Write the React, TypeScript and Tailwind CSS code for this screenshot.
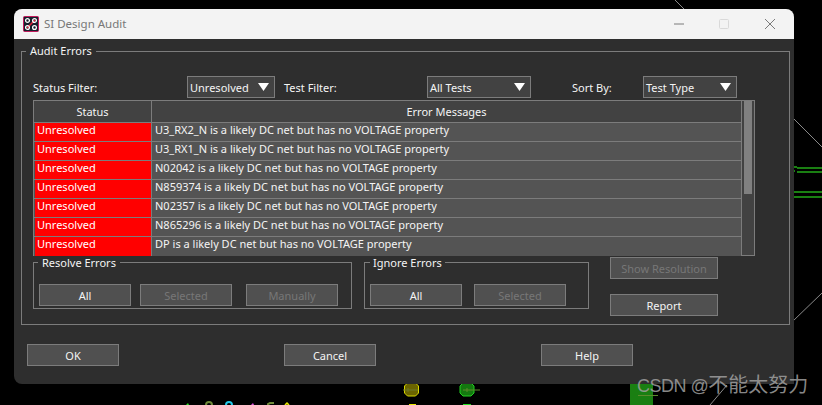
import React from "react";

const rows = [
  "U3_RX2_N is a likely DC net but has no VOLTAGE property",
  "U3_RX1_N is a likely DC net but has no VOLTAGE property",
  "N02042 is a likely DC net but has no VOLTAGE property",
  "N859374 is a likely DC net but has no VOLTAGE property",
  "N02357 is a likely DC net but has no VOLTAGE property",
  "N865296 is a likely DC net but has no VOLTAGE property",
  "DP is a likely DC net but has no VOLTAGE property",
];

function Btn({ label, disabled, className = "" }: { label: string; disabled?: boolean; className?: string }) {
  return (
    <button
      className={`box-border flex h-[22px] w-[92px] items-center justify-center border border-[#7c7c7c] bg-[#505050] text-[11px] leading-none ${
        disabled ? "text-[#777777]" : "text-[#f4f4f4]"
      } ${className}`}
    >
      {label}
    </button>
  );
}

function Select({ value, className }: { value: string; className: string }) {
  return (
    <div className={`box-border flex h-[22px] items-center justify-between border border-[#7c7c7c] bg-[#424242] pl-[2px] pr-[5px] text-[11px] text-[#f4f4f4] ${className}`}>
      <span className="pt-[2px]">{value}</span>
      <svg width="11" height="8" viewBox="0 0 11 8" className="mb-[1px]">
        <path d="M0 0h11L5.5 8z" fill="#ffffff" />
      </svg>
    </div>
  );
}

function Backdrop() {
  return (
    <svg className="absolute left-0 top-0" width="822" height="405" viewBox="0 0 822 405" shapeRendering="crispEdges">
      <path d="M675 0L684 9M793 118L822 147M793 321L822 293M710 405L727 385" stroke="#8a8a8a" strokeWidth="1" fill="none" shapeRendering="auto" />
      <g fill="#1a7f12">
        <rect x="797" y="167" width="25" height="2" />
        <rect x="793" y="166" width="4" height="2" />
        <rect x="797" y="171" width="25" height="2" />
        <rect x="793" y="170" width="2" height="2" />
        <rect x="793" y="191" width="29" height="2" />
        <rect x="793" y="196" width="29" height="2" />
        <rect x="630" y="384" width="23" height="21" />
      </g>
      <rect x="638" y="395" width="20" height="1" fill="#5c8a2c" />
      <g shapeRendering="auto">
        <path d="M407 384h8l3 3v7l-3 3h-8l-3-3v-7z" transform="translate(.5 -1)" fill="#6b6400" stroke="#d8d800" />
        <path d="M403 390h15M408 388v4" stroke="#6f7a2a" fill="none" />
        <path d="M463 384h8l3 3v7l-3 3h-8l-3-3v-7z" transform="translate(0 -1)" fill="#14780f" stroke="#22d022" />
        <path d="M463 390h17M467 388v4" stroke="#5c8a2c" fill="none" />
        <path d="M186 405l2-2 1 2" fill="#22e022" />
        <path d="M206 405a3 3 0 0 1 6 0" stroke="#6f8a3a" strokeWidth="2" fill="none" />
        <path d="M226 405a3 3 0 0 1 6 0" stroke="#22c8e8" strokeWidth="2" fill="none" />
        <path d="M251 405l2-2 1 2" fill="#e050e0" />
        <path d="M268 405v-1l2-1h4" stroke="#6f8a3a" strokeWidth="2" fill="none" />
        <path d="M285 405l2-2 2 2" stroke="#e8e800" strokeWidth="1.5" fill="none" />
      </g>
      <rect x="409" y="404" width="7" height="1" fill="#e8e800" />
      <rect x="463" y="404" width="8" height="1" fill="#22e022" />
    </svg>
  );
}

function AppIcon() {
  return (
    <svg width="16" height="16" viewBox="0 0 16 16">
      <rect x="0.5" y="0.5" width="15" height="15" rx="1" fill="#16202c" stroke="#c2185b" />
      <path d="M4 12L12 4" stroke="#e0203a" strokeWidth="1.6" />
      <circle cx="4.5" cy="4.5" r="1.9" fill="none" stroke="#ffffff" strokeWidth="1.3" />
      <circle cx="11.5" cy="4.5" r="1.9" fill="none" stroke="#ffffff" strokeWidth="1.3" />
      <circle cx="4.5" cy="11.5" r="1.9" fill="none" stroke="#ffffff" strokeWidth="1.3" />
      <circle cx="11.5" cy="11.5" r="1.9" fill="none" stroke="#ffffff" strokeWidth="1.3" />
    </svg>
  );
}

export default function App() {
  return (
    <div
      className="relative h-[405px] w-[822px] overflow-hidden bg-black pl-[14px] pt-[9px]"
      style={{ fontFamily: '"Noto Sans", "Open Sans", sans-serif' }}
    >
      <Backdrop />
      <div className="relative flex h-[375px] w-[780px] flex-col overflow-hidden rounded-t-lg rounded-bl-lg bg-[#2e2e2e]">
        {/* title bar */}
        <div className="flex h-[30px] shrink-0 items-center bg-[#f3f3f3] pl-[9px] pr-[19px]">
          <AppIcon />
          <span className="ml-[5px] text-[11.5px] text-[#777777]">SI Design Audit</span>
          <svg className="ml-auto" width="101" height="10" viewBox="0 0 101 10" fill="none">
            <path d="M0 5h10" stroke="#7a7a7a" />
            <rect x="45.5" y="0.5" width="9" height="9" rx="1" stroke="#d9d9d9" />
            <path d="M91 0l10 10M101 0L91 10" stroke="#7a7a7a" />
          </svg>
        </div>

        {/* body */}
        <div className="flex flex-col px-[7px] pt-[4px]">
          <fieldset className="box-border h-[282px] w-[769px] border border-[#7c7c7c] pl-[11px]">
            <legend className="ml-[-7px] px-[4px] text-[11px] leading-[16px] text-[#f4f4f4]">Audit Errors</legend>

            <div className="mt-[17px] flex items-center text-[11px] text-[#f4f4f4]">
              <span className="w-[154px] pt-[2px]">Status Filter:</span>
              <Select value="Unresolved" className="w-[88px]" />
              <span className="ml-[9px] w-[143px] pt-[2px]">Test Filter:</span>
              <Select value="All Tests" className="w-[104px]" />
              <span className="ml-[41px] w-[71px] pt-[2px]">Sort By:</span>
              <Select value="Test Type" className="w-[94px]" />
            </div>

            {/* table */}
            <div className="mt-[2px] box-border flex h-[156px] w-[722px] border border-[#7c7c7c] bg-[#424242] text-[11px] text-[#f4f4f4]">
              <div className="flex w-[707px] flex-col">
                <div className="box-border flex h-[22px] shrink-0 border-b border-[#7c7c7c]">
                  <div className="box-border flex w-[118px] items-center justify-center border-r border-[#7c7c7c] pt-[1px]">Status</div>
                  <div className="flex flex-1 items-center justify-center pt-[1px]">Error Messages</div>
                </div>
                {rows.map((r) => (
                  <div key={r} className="box-border flex h-[19px] shrink-0 border-b border-[#7c7c7c] bg-[#545454] last:border-b-0">
                    <div className="box-border w-[118px] border-r border-[#7c7c7c] pl-[1px]">
                      <div className="flex h-full items-center bg-[#ff0000] pb-[4px] pl-[2px] text-white">Unresolved</div>
                    </div>
                    <div className="flex flex-1 items-center pb-[4px] pl-[3px]">{r}</div>
                  </div>
                ))}
              </div>
              <div className="box-border flex-1 border-l border-[#7c7c7c] pl-[2px]">
                <div className="h-[93px] w-[8px] bg-[#808080]" />
              </div>
            </div>

            {/* action groups */}
            <div className="mt-[-1px] flex items-start">
              <fieldset className="box-border h-[54px] w-[319px] border border-[#7c7c7c] pl-[5px]">
                <legend className="ml-[-1px] px-[4px] text-[11px] leading-[14px] text-[#f4f4f4]">
                  <span className="relative top-[1px]">Resolve Errors</span>
                </legend>
                <div className="mt-[15px] flex">
                  <Btn label="All" />
                  <Btn label="Selected" disabled className="ml-[9px]" />
                  <Btn label="Manually" disabled className="ml-[14px]" />
                </div>
              </fieldset>
              <fieldset className="ml-[12px] box-border h-[54px] w-[225px] border border-[#7c7c7c] pl-[5px]">
                <legend className="px-[3px] text-[11px] leading-[14px] text-[#f4f4f4]">
                  <span className="relative top-[1px]">Ignore Errors</span>
                </legend>
                <div className="mt-[15px] flex">
                  <Btn label="All" />
                  <Btn label="Selected" disabled className="ml-[12px]" />
                </div>
              </fieldset>
              <div className="ml-[21px] flex flex-col gap-[15px] pt-[2px]">
                <Btn label="Show Resolution" disabled className="w-[108px]" />
                <Btn label="Report" className="w-[108px]" />
              </div>
            </div>
          </fieldset>

          <div className="mt-[19px] flex gap-[165px] pl-[6px]">
            <Btn label="OK" />
            <Btn label="Cancel" />
            <Btn label="Help" />
          </div>
        </div>
      </div>
      <span
        className="absolute left-[637px] top-[373px] text-[18px] leading-[24px] text-[#a0a0a0]/85"
        style={{ fontFamily: '"Liberation Sans", "Noto Sans CJK SC", sans-serif' }}
      >
        <span className="tracking-[-0.5px]">CSDN @</span>
        <span className="text-[20px]">不能太努力</span>
      </span>
    </div>
  );
}
